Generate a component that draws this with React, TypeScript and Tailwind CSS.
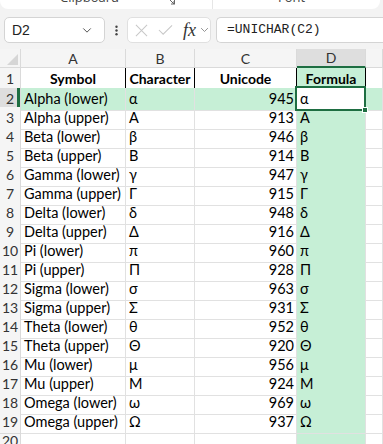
import * as React from 'react';

const rows: [string, number][] = [
  ['Alpha (lower)', 945],
  ['Alpha (upper)', 913],
  ['Beta (lower)', 946],
  ['Beta (upper)', 914],
  ['Gamma (lower)', 947],
  ['Gamma (upper)', 915],
  ['Delta (lower)', 948],
  ['Delta (upper)', 916],
  ['Pi (lower)', 960],
  ['Pi (upper)', 928],
  ['Sigma (lower)', 963],
  ['Sigma (upper)', 931],
  ['Theta (lower)', 952],
  ['Theta (upper)', 920],
  ['Mu (lower)', 956],
  ['Mu (upper)', 924],
  ['Omega (lower)', 969],
  ['Omega (upper)', 937],
];

const cols = 'grid grid-cols-[21px_105px_69px_102px_69px_1fr]';
const cellFont = { fontFamily: 'Lato, "Liberation Sans", sans-serif' };

function Chevron({ className }: { className?: string }) {
  return (
    <svg viewBox="0 0 12 8" className={className} fill="none" stroke="currentColor" strokeWidth="1.2">
      <path d="M1.5 1.5 6 6l4.5-4.5" />
    </svg>
  );
}

function FormulaBar() {
  return (
    <div className="bg-[#f3f3f3]">
      {/* ribbon bottom, mostly scrolled away */}
      <div className="h-[9px] flex mr-[3px] bg-white rounded-b-lg overflow-hidden text-[13px] text-[#444]" style={{ fontFamily: '"Open Sans", sans-serif' }}>
        <div className="w-[213px] relative border-r border-[#e6e6e6]">
          <span className="absolute left-[60px] top-[-12px]">Clipboard</span>
          <svg viewBox="0 0 8 8" className="absolute left-[167px] top-[-3px] w-[8px] h-[8px] text-[#666]" fill="none" stroke="currentColor" strokeWidth="1">
            <path d="M0.5 0.5h7v7M2 2l5 5M4 7h3V4" />
          </svg>
        </div>
        <div className="flex-1 relative">
          <span className="absolute left-[65px] top-[-12px]">Font</span>
        </div>
      </div>
      <div className="h-[40px] flex items-start pt-[8px] pl-[4px] gap-0">
        <div className="w-[101px] h-[26px] bg-white border border-[#d4d4d4] rounded-[5px] flex items-center pl-[7px] pr-[12px] justify-between text-[14px] text-[#222]" style={{ fontFamily: '"Liberation Sans", sans-serif' }}>
          <span>D2</span>
          <Chevron className="w-[10px] h-[7px] text-[#555]" />
        </div>
        <div className="w-[22px] h-[26px] flex items-center justify-center">
          <svg viewBox="0 0 4 14" className="w-[3px] h-[11px] text-[#444]" fill="currentColor">
            <circle cx="2" cy="2" r="1.6" />
            <circle cx="2" cy="7" r="1.6" />
            <circle cx="2" cy="12" r="1.6" />
          </svg>
        </div>
        <div className="w-[84px] h-[26px] bg-white border border-[#e0e0e0] rounded-[5px] flex items-center pl-[7px] text-[#c8c8c8]">
          <svg viewBox="0 0 14 14" className="w-[13px] h-[13px]" fill="none" stroke="currentColor" strokeWidth="1.1">
            <path d="M1 1l12 12M13 1 1 13" />
          </svg>
          <svg viewBox="0 0 16 12" className="w-[15px] h-[12px] ml-[10px]" fill="none" stroke="currentColor" strokeWidth="1.1">
            <path d="M1 6l4.5 4.5L15 1" />
          </svg>
          <span className="ml-[10px] text-[18px] italic text-[#333] leading-none" style={{ fontFamily: '"Liberation Serif", serif' }}>fx</span>
          <Chevron className="w-[9px] h-[6px] ml-[4px] text-[#888]" />
        </div>
        <div className="ml-[5px] flex-1 h-[26px] bg-white border border-r-0 border-[#d4d4d4] rounded-l-[5px] flex items-center pl-[10px] text-[13px] text-[#222]" style={{ fontFamily: '"Liberation Mono", monospace' }}>
          =UNICHAR(C2)
        </div>
      </div>
    </div>
  );
}

export default function App() {
  const headerCell = 'h-[19px] bg-[#f5f5f5] border-r border-b border-[#dadada] flex items-center justify-center text-[14px] text-[#333]';
  const rowHead = 'bg-[#f5f5f5] border-r border-b border-[#dadada] flex items-center justify-center text-[14px] text-[#333]';
  const cell = 'border-r border-b border-[#e1e1e1] flex items-center text-[14.5px] text-black whitespace-nowrap';
  const titleCell = 'border-r border-b border-[#e1e1e1] !border-r-black flex items-center justify-center font-bold text-[14px] text-black whitespace-nowrap';

  return (
    <div className="w-[383px] h-[444px] overflow-hidden bg-white" style={cellFont}>
      <FormulaBar />

      {/* column headers */}
      <div className={cols}>
        <div className={`${headerCell} relative`}>
          <svg viewBox="0 0 10 10" className="absolute right-[2px] bottom-[2px] w-[11px] h-[11px] text-[#d6d6d6]" fill="currentColor">
            <path d="M10 0v10H0z" />
          </svg>
        </div>
        <div className={headerCell}>A</div>
        <div className={headerCell}>B</div>
        <div className={headerCell}>C</div>
        <div className={`${headerCell} !bg-[#dedede] !border-b-2 !border-b-[#1e6e42] text-[#1e6e42]`}>D</div>
        <div className={headerCell}></div>
      </div>

      {/* row 1 */}
      <div className={`${cols} h-[20px]`}>
        <div className={rowHead}>1</div>
        <div className={titleCell}>Symbol</div>
        <div className={titleCell}>Character</div>
        <div className={titleCell}>Unicode</div>
        <div className={`${titleCell} bg-[#c6efd6]`}>Formula</div>
        <div className={cell}></div>
      </div>

      {rows.map(([name, code], i) => {
        const active = i === 0;
        const ch = String.fromCharCode(code);
        const rowBg = active ? 'bg-[#c6efd6]' : '';
        return (
          <div key={name} className={`${cols} h-[19px]`}>
            <div className={`${rowHead} relative ${active ? '!bg-[#dedede] text-[#1e6e42]' : ''}`}>
              {i + 2}
              {active && <span className="absolute right-0 top-0 bottom-0 w-[3px] bg-[#1e6e42]" />}
            </div>
            <div className={`${cell} pl-[3px] overflow-hidden ${rowBg}`}>{name}</div>
            <div className={`${cell} pl-[3px] ${rowBg}`}>{ch}</div>
            <div className={`${cell} justify-end pr-[2px] ${rowBg}`}>{code}</div>
            <div className={`${cell} pl-[3px] relative ${active ? 'bg-white z-10' : 'bg-[#c6efd6]'}`}>
              {ch}
              {active && (
                <>
                  <span className="absolute left-[-2px] top-[-2px] right-[-1px] bottom-[-1px] border-2 border-[#1e6e42] pointer-events-none" />
                  <span className="absolute right-[-3px] bottom-[-3px] w-[6px] h-[6px] bg-[#1e6e42] border border-white" />
                </>
              )}
            </div>
            <div className={`${cell} ${rowBg}`}></div>
          </div>
        );
      })}

      {/* row 20 */}
      <div className={`${cols} h-[19px]`}>
        <div className={rowHead}>20</div>
        <div className={cell}></div>
        <div className={cell}></div>
        <div className={cell}></div>
        <div className={`${cell} bg-[#c6efd6]`}></div>
        <div className={cell}></div>
      </div>
    </div>
  );
}
